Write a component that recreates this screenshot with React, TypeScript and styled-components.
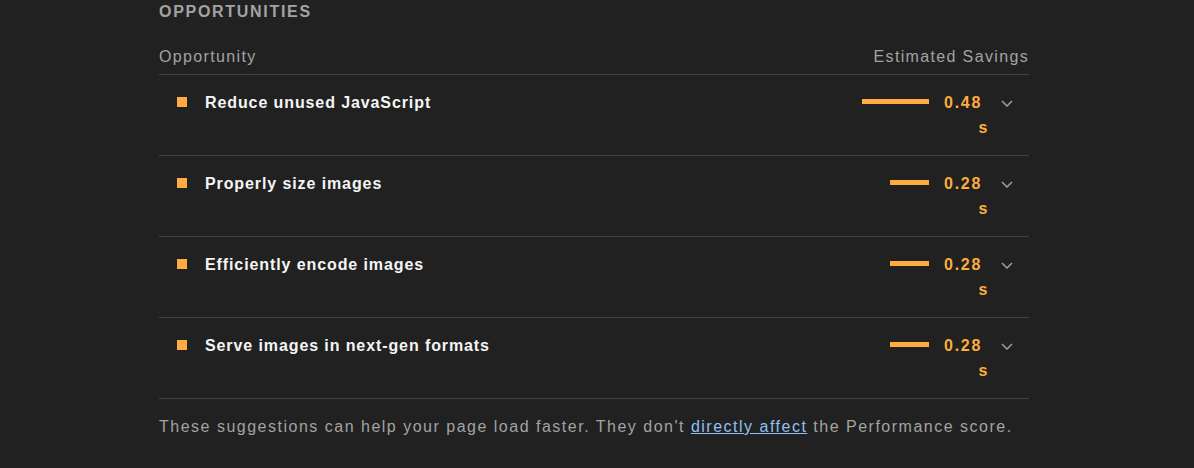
import React from 'react';
import styled, { createGlobalStyle } from 'styled-components';

const GlobalStyle = createGlobalStyle`
  html, body {
    margin: 0;
    padding: 0;
    background: #212121;
  }
  body {
    font-family: "Liberation Sans", Arial, sans-serif;
    font-size: 16px;
    color: #a3a3a3;
  }
`;

const S = {
  Page: styled.div`
    width: 1194px;
    height: 468px;
    box-sizing: border-box;
    padding-left: 159px;
    overflow: hidden;
  `,

  Group: styled.section`
    width: 870px;
  `,

  GroupTitle: styled.div`
    padding-top: 2px;
    line-height: 20px;
    font-weight: bold;
    letter-spacing: 1.7px;
    text-transform: uppercase;
    color: #a3a3a3;
  `,

  TableHead: styled.div`
    display: flex;
    justify-content: space-between;
    margin-top: 25px;
    padding-bottom: 7px;
    line-height: 20px;
    letter-spacing: 1.35px;
    color: #a3a3a3;
    border-bottom: 1px solid #424242;
  `,

  Row: styled.div`
    display: flex;
    align-items: flex-start;
    padding: 15px 0;
    line-height: 25px;
    border-bottom: 1px solid #424242;
  `,

  Marker: styled.span`
    flex: none;
    width: 10px;
    height: 10px;
    margin: 7px 18px 0 18px;
    background: #ffab40;
  `,

  Title: styled.div`
    flex: 1;
    font-weight: bold;
    letter-spacing: 0.9px;
    color: #f5f5f5;
  `,

  Bar: styled.div`
    flex: none;
    height: 5px;
    margin-top: 9px;
    background: #ffab40;
  `,

  Savings: styled.div`
    flex: none;
    display: flex;
    flex-direction: column;
    align-items: flex-end;
    width: 46px;
    margin-left: 14px;
    font-weight: bold;
    letter-spacing: 1.7px;
    color: #ffab40;
  `,

  Value: styled.span`
    padding-right: 7px;
  `,

  Chevron: styled.svg`
    flex: none;
    margin: 10px 16px 0 12px;
  `,

  Footer: styled.p`
    margin: 0;
    padding-top: 15px;
    line-height: 25px;
    letter-spacing: 1.5px;
    color: #a3a3a3;
  `,

  Link: styled.a`
    color: #8ec1f2;
    text-decoration: underline;
  `,
};

const audits = [
  { title: 'Reduce unused JavaScript', seconds: 0.48 },
  { title: 'Properly size images', seconds: 0.28 },
  { title: 'Efficiently encode images', seconds: 0.28 },
  { title: 'Serve images in next-gen formats', seconds: 0.28 },
];

const App: React.FC = () => {
  return (
    <S.Page>
      <GlobalStyle />
      <S.Group>
        <S.GroupTitle>Opportunities</S.GroupTitle>
        <S.TableHead>
          <span>Opportunity</span>
          <span>Estimated Savings</span>
        </S.TableHead>
        {audits.map((audit) => (
          <S.Row key={audit.title}>
            <S.Marker />
            <S.Title>{audit.title}</S.Title>
            <S.Bar style={{ width: Math.round(audit.seconds * 140) }} />
            <S.Savings>
              <S.Value>{audit.seconds.toFixed(2)}</S.Value>
              <span>s</span>
            </S.Savings>
            <S.Chevron width="12" height="7" viewBox="0 0 12 7">
              <path d="M1 1l5 5 5-5" fill="none" stroke="#9e9e9e" strokeWidth="1.5" />
            </S.Chevron>
          </S.Row>
        ))}
        <S.Footer>
          These suggestions can help your page load faster. They don't{' '}
          <S.Link href="#">directly affect</S.Link> the Performance score.
        </S.Footer>
      </S.Group>
    </S.Page>
  );
};

export default App;
